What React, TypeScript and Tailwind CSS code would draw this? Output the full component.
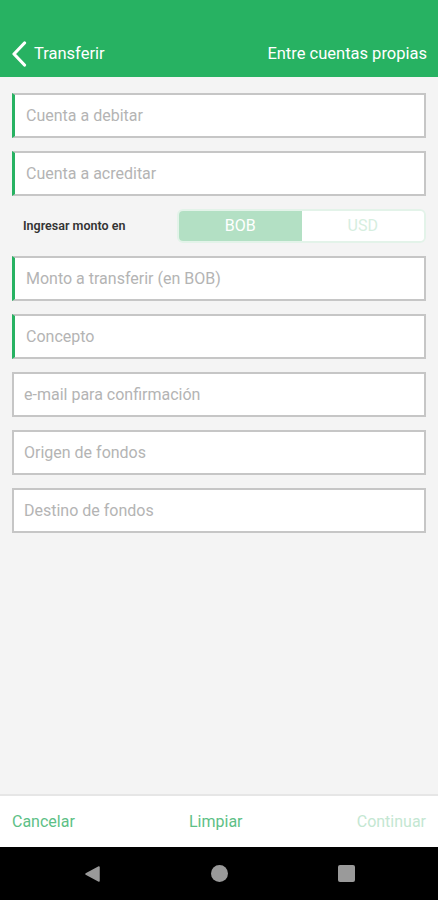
import React from 'react';

const fields = [
  { label: 'Cuenta a debitar', accent: true },
  { label: 'Cuenta a acreditar', accent: true },
];

const moreFields = [
  { label: 'Monto a transferir (en BOB)', accent: true },
  { label: 'Concepto', accent: true },
  { label: 'e-mail para confirmación', accent: false },
  { label: 'Origen de fondos', accent: false },
  { label: 'Destino de fondos', accent: false },
];

function Field({ label, accent }: { label: string; accent: boolean }) {
  return (
    <div
      className={`flex h-[45px] items-center border-2 border-[#c6c6c6] bg-white ${
        accent ? 'border-l-[3px] border-l-[#27b262] pl-[11px]' : 'pl-[10px]'
      }`}
    >
      <span className="text-[16px] text-[#b4b4b4]">{label}</span>
    </div>
  );
}

export default function App() {
  return (
    <div className="flex h-[900px] w-[438px] flex-col bg-[#f4f4f4] font-['Roboto',sans-serif]">
      <header className="flex h-[77px] items-end bg-[#27b262] px-[11px] pb-[10px] text-white">
        <div className="flex items-center gap-[7px]">
          <svg width="16" height="26" viewBox="0 0 16 26" fill="none">
            <path d="M13.5 2 L3 13 L13.5 24" stroke="white" strokeWidth="3.2" strokeLinecap="round" strokeLinejoin="round" />
          </svg>
          <span className="text-[16.5px]">Transferir</span>
        </div>
        <span className="ml-auto text-[16.5px]">Entre cuentas propias</span>
      </header>

      <main className="flex flex-1 flex-col gap-[13px] px-[12px] pt-[16px]">
        {fields.map((f) => (
          <Field key={f.label} {...f} />
        ))}
        <div className="flex h-[34px] items-center">
          <span className="pl-[11px] text-[12.5px] font-semibold text-[#333]">Ingresar monto en</span>
          <div className="ml-auto flex h-[34px] w-[249px] overflow-hidden rounded-[6px] border-2 border-[#e3f3e9]">
            <div className="flex flex-1 items-center justify-center bg-[#b3e0c4] text-[16px] text-white">BOB</div>
            <div className="flex flex-1 items-center justify-center bg-white text-[16px] text-[#d6eedf]">USD</div>
          </div>
        </div>
        {moreFields.map((f) => (
          <Field key={f.label} {...f} />
        ))}
      </main>

      <footer className="flex h-[53px] items-center justify-between border-t-2 border-[#e6e6e6] bg-white px-[12px] text-[16px]">
        <span className="text-[#5dbf86]">Cancelar</span>
        <span className="text-[#5dbf86]">Limpiar</span>
        <span className="text-[#c4e7d2]">Continuar</span>
      </footer>

      <nav className="flex h-[53px] items-center justify-center gap-[110px] bg-black">
        <svg width="17" height="18" viewBox="0 0 17 18">
          <path d="M15 2 L15 16 L2 9 Z" fill="#9a9a9a" stroke="#9a9a9a" strokeWidth="1.5" strokeLinejoin="round" />
        </svg>
        <div className="h-[17px] w-[17px] rounded-full bg-[#9a9a9a]" />
        <div className="h-[17px] w-[17px] rounded-[2px] bg-[#9a9a9a]" />
      </nav>
    </div>
  );
}
